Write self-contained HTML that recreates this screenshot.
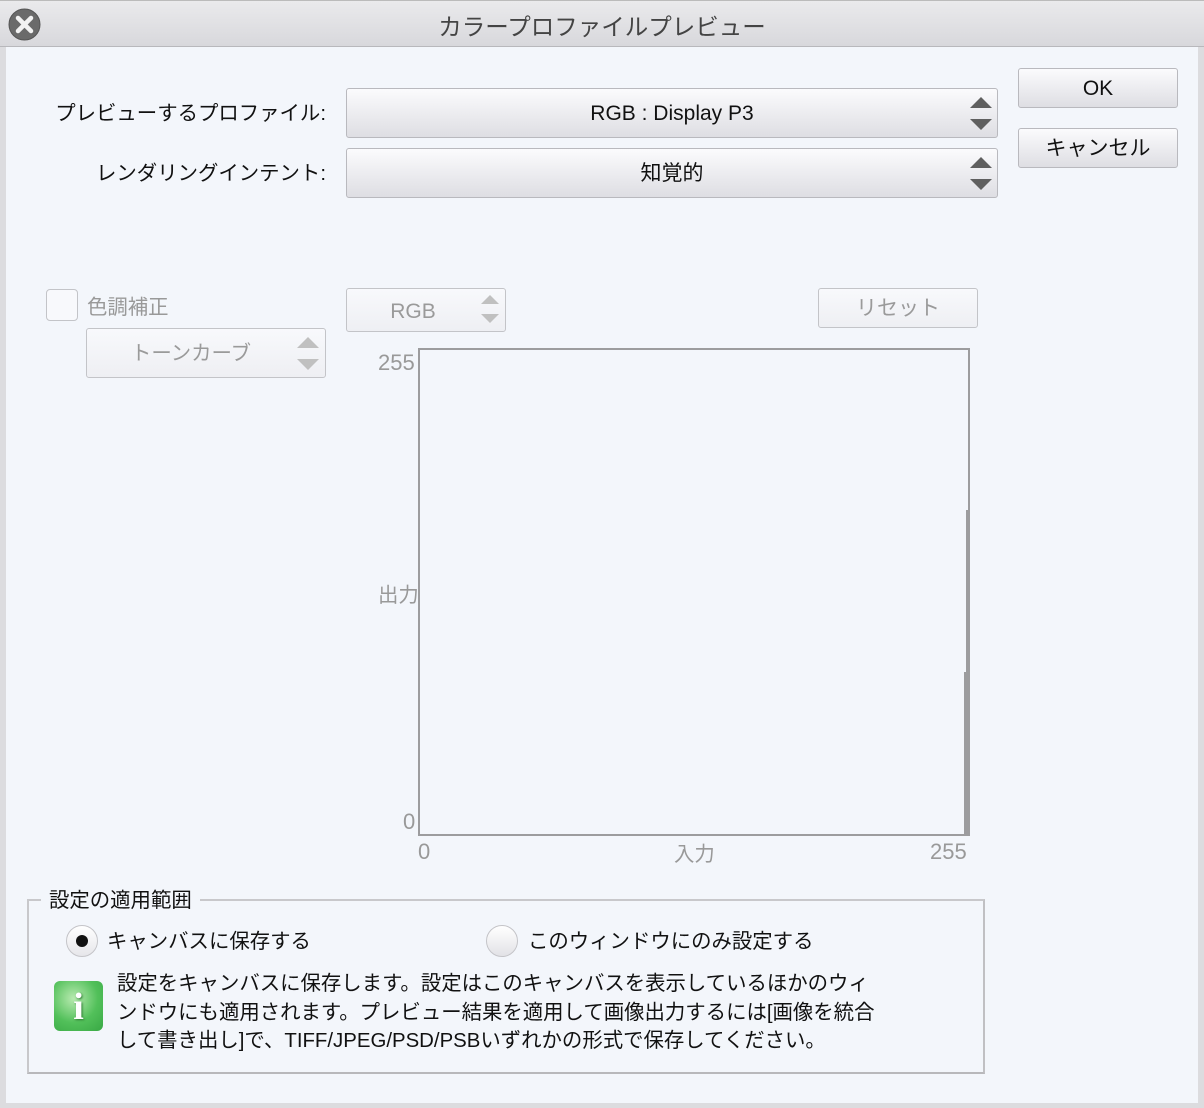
<!DOCTYPE html>
<html><head><meta charset="utf-8"><style>
*{margin:0;padding:0;box-sizing:border-box}
body{width:1204px;height:1108px;background:#dcdcdf;font-family:"Liberation Sans","Noto Sans CJK JP",sans-serif;position:relative;overflow:hidden;color:#111}
.a{position:absolute}
#win{left:6px;top:0;width:1192px;height:1103px;background:#f3f6fb}
#title{left:0;top:0;width:1204px;height:47px;background:linear-gradient(#eaeaec,#d8d8dc);border-bottom:1px solid #b8b8bc;border-top:1px solid #bbb}
#title span{position:absolute;left:0;right:0;top:7px;text-align:center;font-size:23.5px;color:#444}
.btn{background:linear-gradient(#fbfbfd,#dedee3);border:1px solid #b9b9be;border-radius:3px;text-align:center;font-size:21px}
.dis{background:linear-gradient(#f8f9fc,#eeeff3);border:1px solid #c3c4c8;border-radius:3px;color:#9a9a9a;text-align:center}
.up{position:absolute;width:0;height:0;border-left:11px solid transparent;border-right:11px solid transparent;border-bottom:11px solid #5f5f5f}
.dn{position:absolute;width:0;height:0;border-left:11px solid transparent;border-right:11px solid transparent;border-top:11px solid #5f5f5f}
.lbl{font-size:20.4px;text-align:right}
.g{color:#999;font-size:20.4px}
</style></head><body>
<div class="a" id="win"></div>
<div class="a" id="title"><span>カラープロファイルプレビュー</span></div>
<svg class="a" style="left:8px;top:8px" width="33" height="33" viewBox="0 0 33 33"><circle cx="16.5" cy="16.5" r="15.5" fill="#6a6a6a"/><circle cx="16.5" cy="16.5" r="15.5" fill="none" stroke="#555"/><path d="M10 10L23 23M23 10L10 23" stroke="#f2f2f2" stroke-width="4.5" stroke-linecap="round"/></svg>

<div class="a lbl" style="left:20px;top:96px;width:306px">プレビューするプロファイル:</div>
<div class="a lbl" style="left:20px;top:156px;width:306px">レンダリングインテント:</div>

<div class="a btn" style="left:346px;top:88px;width:652px;height:50px;line-height:50px">RGB : Display P3<div class="up" style="left:623px;top:8px"></div><div class="dn" style="left:623px;top:30px"></div></div>
<div class="a btn" style="left:346px;top:148px;width:652px;height:50px;line-height:50px">知覚的<div class="up" style="left:623px;top:8px"></div><div class="dn" style="left:623px;top:30px"></div></div>

<div class="a btn" style="left:1018px;top:68px;width:160px;height:40px;line-height:40px">OK</div>
<div class="a btn" style="left:1018px;top:128px;width:160px;height:40px;line-height:40px">キャンセル</div>

<div class="a" style="left:46px;top:289px;width:32px;height:32px;border:1px solid #c3c4c8;border-radius:4px;background:#f8f9fc"></div>
<div class="a g" style="left:87px;top:290px">色調補正</div>
<div class="a dis" style="left:86px;top:328px;width:240px;height:50px;line-height:50px;font-size:20.4px;padding-right:30px">トーンカーブ<div class="up" style="left:210px;top:8px;border-bottom-color:#c0c0c0"></div><div class="dn" style="left:210px;top:30px;border-top-color:#c0c0c0"></div></div>
<div class="a dis" style="left:346px;top:288px;width:160px;height:44px;line-height:46px;font-size:21px;padding-right:26px">RGB<div class="up" style="left:134px;top:6px;border-bottom-color:#c0c0c0;border-width:0 9px 9px"></div><div class="dn" style="left:134px;top:25px;border-top-color:#c0c0c0;border-width:9px 9px 0"></div></div>
<div class="a dis" style="left:818px;top:288px;width:160px;height:40px;line-height:40px;font-size:21px">リセット</div>

<div class="a" style="left:418px;top:348px;width:552px;height:488px;border:2px solid #9c9c9e"></div>
<div class="a" style="left:966px;top:510px;width:4px;height:326px;background:#9c9c9e"></div>
<div class="a" style="left:964px;top:672px;width:6px;height:164px;background:#9c9c9e"></div>
<div class="a g" style="left:378px;top:350px;font-size:22px">255</div>
<div class="a g" style="left:378px;top:578px">出力</div>
<div class="a g" style="left:403px;top:809px;font-size:22px">0</div>
<div class="a g" style="left:418px;top:839px;font-size:22px">0</div>
<div class="a g" style="left:674px;top:837px">入力</div>
<div class="a g" style="left:930px;top:839px;font-size:22px">255</div>

<div class="a" style="left:27px;top:899px;width:958px;height:175px;border:2px solid #c8c8cb;border-bottom-color:#b8b8bb;border-right-color:#c0c0c3"></div>
<div class="a" style="left:41px;top:883px;padding:0 8px;background:#f3f6fb;font-size:20.4px">設定の適用範囲</div>
<div class="a" style="left:66px;top:925px;width:32px;height:32px;border-radius:50%;border:1px solid #c4c4c8;background:linear-gradient(#fff,#e6e6ea)"></div>
<div class="a" style="left:76px;top:935px;width:12px;height:12px;border-radius:50%;background:#111"></div>
<div class="a" style="left:107px;top:924px;font-size:20.4px">キャンバスに保存する</div>
<div class="a" style="left:486px;top:925px;width:32px;height:32px;border-radius:50%;border:1px solid #c4c4c8;background:linear-gradient(#fff,#e2e2e6)"></div>
<div class="a" style="left:528px;top:924px;font-size:20.4px">このウィンドウにのみ設定する</div>
<div class="a" style="left:54px;top:981px;width:49px;height:50px;border-radius:6px;background:radial-gradient(circle at 40% 35%,#b8eab0,#52c05a 55%,#38a844)"></div>
<div class="a" style="left:54px;top:985px;width:49px;text-align:center;font-family:'Liberation Serif',serif;font-weight:bold;font-size:38px;color:#fff;text-shadow:1px 1px 2px #2a7a30">i</div>
<div class="a" style="left:117px;top:970px;font-size:20.4px;line-height:28.5px;width:820px;white-space:nowrap">設定をキャンバスに保存します。設定はこのキャンバスを表示しているほかのウィ<br>ンドウにも適用されます。プレビュー結果を適用して画像出力するには[画像を統合<br>して書き出し]で、TIFF/JPEG/PSD/PSBいずれかの形式で保存してください。</div>
</body></html>
